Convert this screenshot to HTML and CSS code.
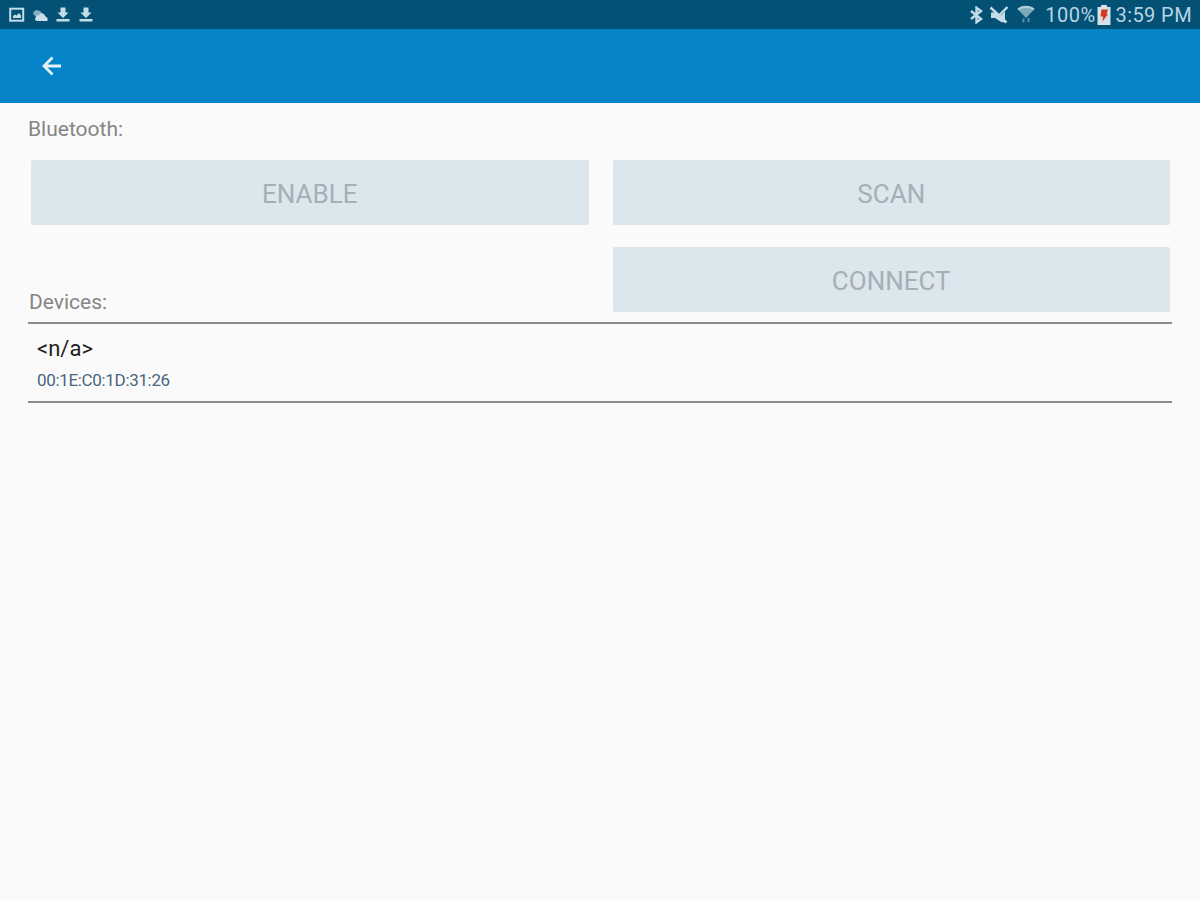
FILE: index.html
```html
<!DOCTYPE html>
<html lang="en">
<head>
    <meta charset="UTF-8">
    <title>Bluetooth</title>
    <link rel="stylesheet" href="styles.css">
</head>
<body>
    <div class="statusbar">
        <div class="notifications">
            <svg width="16" height="16" viewBox="0 0 16 16">
                <rect x="1.2" y="1.7" width="13" height="12" fill="none" stroke="#c3dce8" stroke-width="2"/>
                <path d="M4 11V9l2-1.500 1.500 1L10 6l2 2.500V11z" fill="#c3dce8"/>
            </svg>
            <svg width="16" height="16" viewBox="0 0 16 16">
                <path d="M1 5.500l3-2.500 4 1 2 2-5 4-3-2z" fill="#88b0c4"/>
                <path d="M3 13l1-4 3-1 2-2 3 1 1 2 2.500 2v3H5z" fill="#c9e0ea"/>
            </svg>
            <svg width="16" height="16" viewBox="0 0 16 16">
                <path d="M5.500 0.500h5v5H13.500l-5.500 5.500L2.500 5.500h3zM1.500 12h13v2.600h-13z" fill="#c3dce8"/>
            </svg>
            <svg width="16" height="16" viewBox="0 0 16 16">
                <path d="M5.500 0.500h5v5H13.500l-5.500 5.500L2.500 5.500h3zM1.500 12h13v2.600h-13z" fill="#c3dce8"/>
            </svg>
        </div>
        <div class="system">
            <svg class="bt" width="14" height="18" viewBox="0 0 14 18">
                <path d="M2 5l10 8-4.500 3.200V1.800L12 5 2 13" fill="none" stroke="#c3dce8" stroke-width="2.400"/>
            </svg>
            <svg class="mute" width="20" height="18" viewBox="0 0 20 18">
                <path d="M2 6.500h4l3 2L16 3v13.500l-4-.5-6-4H2z" fill="#c3dce8"/>
                <path d="M3 1l8 7.500L18.500 1" fill="none" stroke="#075175" stroke-width="3"/>
                <path d="M1.500 1.500l16 15M18.500 1L10 9.500" stroke="#c3dce8" stroke-width="2.400"/>
            </svg>
            <svg class="wifi" width="18" height="20" viewBox="0 0 18 20">
                <path d="M1 4.500C5 .8 13 .8 17 4.500L9 13z" fill="#7fa9bd"/>
                <path d="M1 4.500C5 .8 13 .8 17 4.500" fill="none" stroke="#b4cfdb" stroke-width="1.800"/>
                <path d="M6.500 13.500v4M11.500 13v4" stroke="#5c91ad" stroke-width="2"/>
            </svg>
            <span class="percent">100%</span>
            <svg class="battery" width="14" height="20" viewBox="0 0 14 20">
                <path d="M4 0h6v2h3.500v18H.5V2H4z" fill="#d5e2e7"/>
                <path d="M4.500 4.500H11L9.500 9H11l-5.500 7.500L6 11.500H3.500z" fill="#d13a20"/>
            </svg>
            <span class="clock">3:59 PM</span>
        </div>
    </div>
    <div class="toolbar">
        <svg width="20" height="20" viewBox="0 0 20 20">
            <path d="M19 10H3M10.500 1.500L2 10l8.500 8.500" fill="none" stroke="#e3f2fa" stroke-width="2.800"/>
        </svg>
    </div>
    <div class="content">
        <p class="label">Bluetooth:</p>
        <div class="buttons">
            <button disabled>ENABLE</button>
            <button disabled>SCAN</button>
            <p class="label devices">Devices:</p>
            <button disabled>CONNECT</button>
        </div>
        <div class="list">
            <div class="name">&lt;n/a&gt;</div>
            <div class="address">00:1E:C0:1D:31:26</div>
        </div>
    </div>
</body>
</html>
```
FILE: styles.css
```css
* {
    margin: 0;
    padding: 0;
    box-sizing: border-box;
}
body {
    background-color: #fafafa;
    font-family: Roboto, sans-serif;
    height: 100vh;
    overflow: hidden;
}
svg {
    display: block;
    flex: none;
}
.statusbar {
    display: flex;
    justify-content: space-between;
    height: 29px;
    padding: 0 9px;
    background-color: #045176;
    color: #b9d4e1;
}
.notifications {
    display: flex;
    align-items: center;
    gap: 7px;
}
.system {
    display: flex;
    align-items: center;
    font-size: 20px;
    line-height: 30px;
    white-space: nowrap;
}
.mute {
    margin-left: 6px;
}
.wifi {
    margin-left: 8px;
}
.percent {
    margin-left: 10px;
    letter-spacing: 0.5px;
}
.battery {
    margin: 0 5px 0 1px;
}
.clock {
    margin-right: -1px;
    letter-spacing: 0.4px;
}
.toolbar {
    display: flex;
    align-items: center;
    height: 74px;
    padding-left: 42px;
    background-color: #0584c7;
}
.content {
    padding: 13px 28px 0;
}
.label {
    color: #858585;
    font-size: 21px;
    line-height: 26px;
}
.buttons {
    display: grid;
    grid-template-columns: 1fr 1fr;
    gap: 22px 24px;
    padding: 18px 2px 10px 3px;
}
button {
    height: 65px;
    padding-top: 3px;
    border: none;
    border-radius: 2px;
    background-color: #dce6ed;
    color: #a5afb6;
    font-family: Roboto, sans-serif;
    font-size: 26px;
}
.devices {
    align-self: end;
    margin: 0 0 -3px -2px;
}
.list {
    height: 81px;
    padding: 12px 9px 0;
    border-top: 2px solid #8c8c8c;
    border-bottom: 2px solid #8c8c8c;
}
.name {
    color: #222;
    font-size: 22px;
    line-height: 26px;
}
.address {
    margin-top: 8px;
    color: #4b6580;
    font-size: 17px;
    letter-spacing: -0.33px;
    line-height: 20px;
}
```
